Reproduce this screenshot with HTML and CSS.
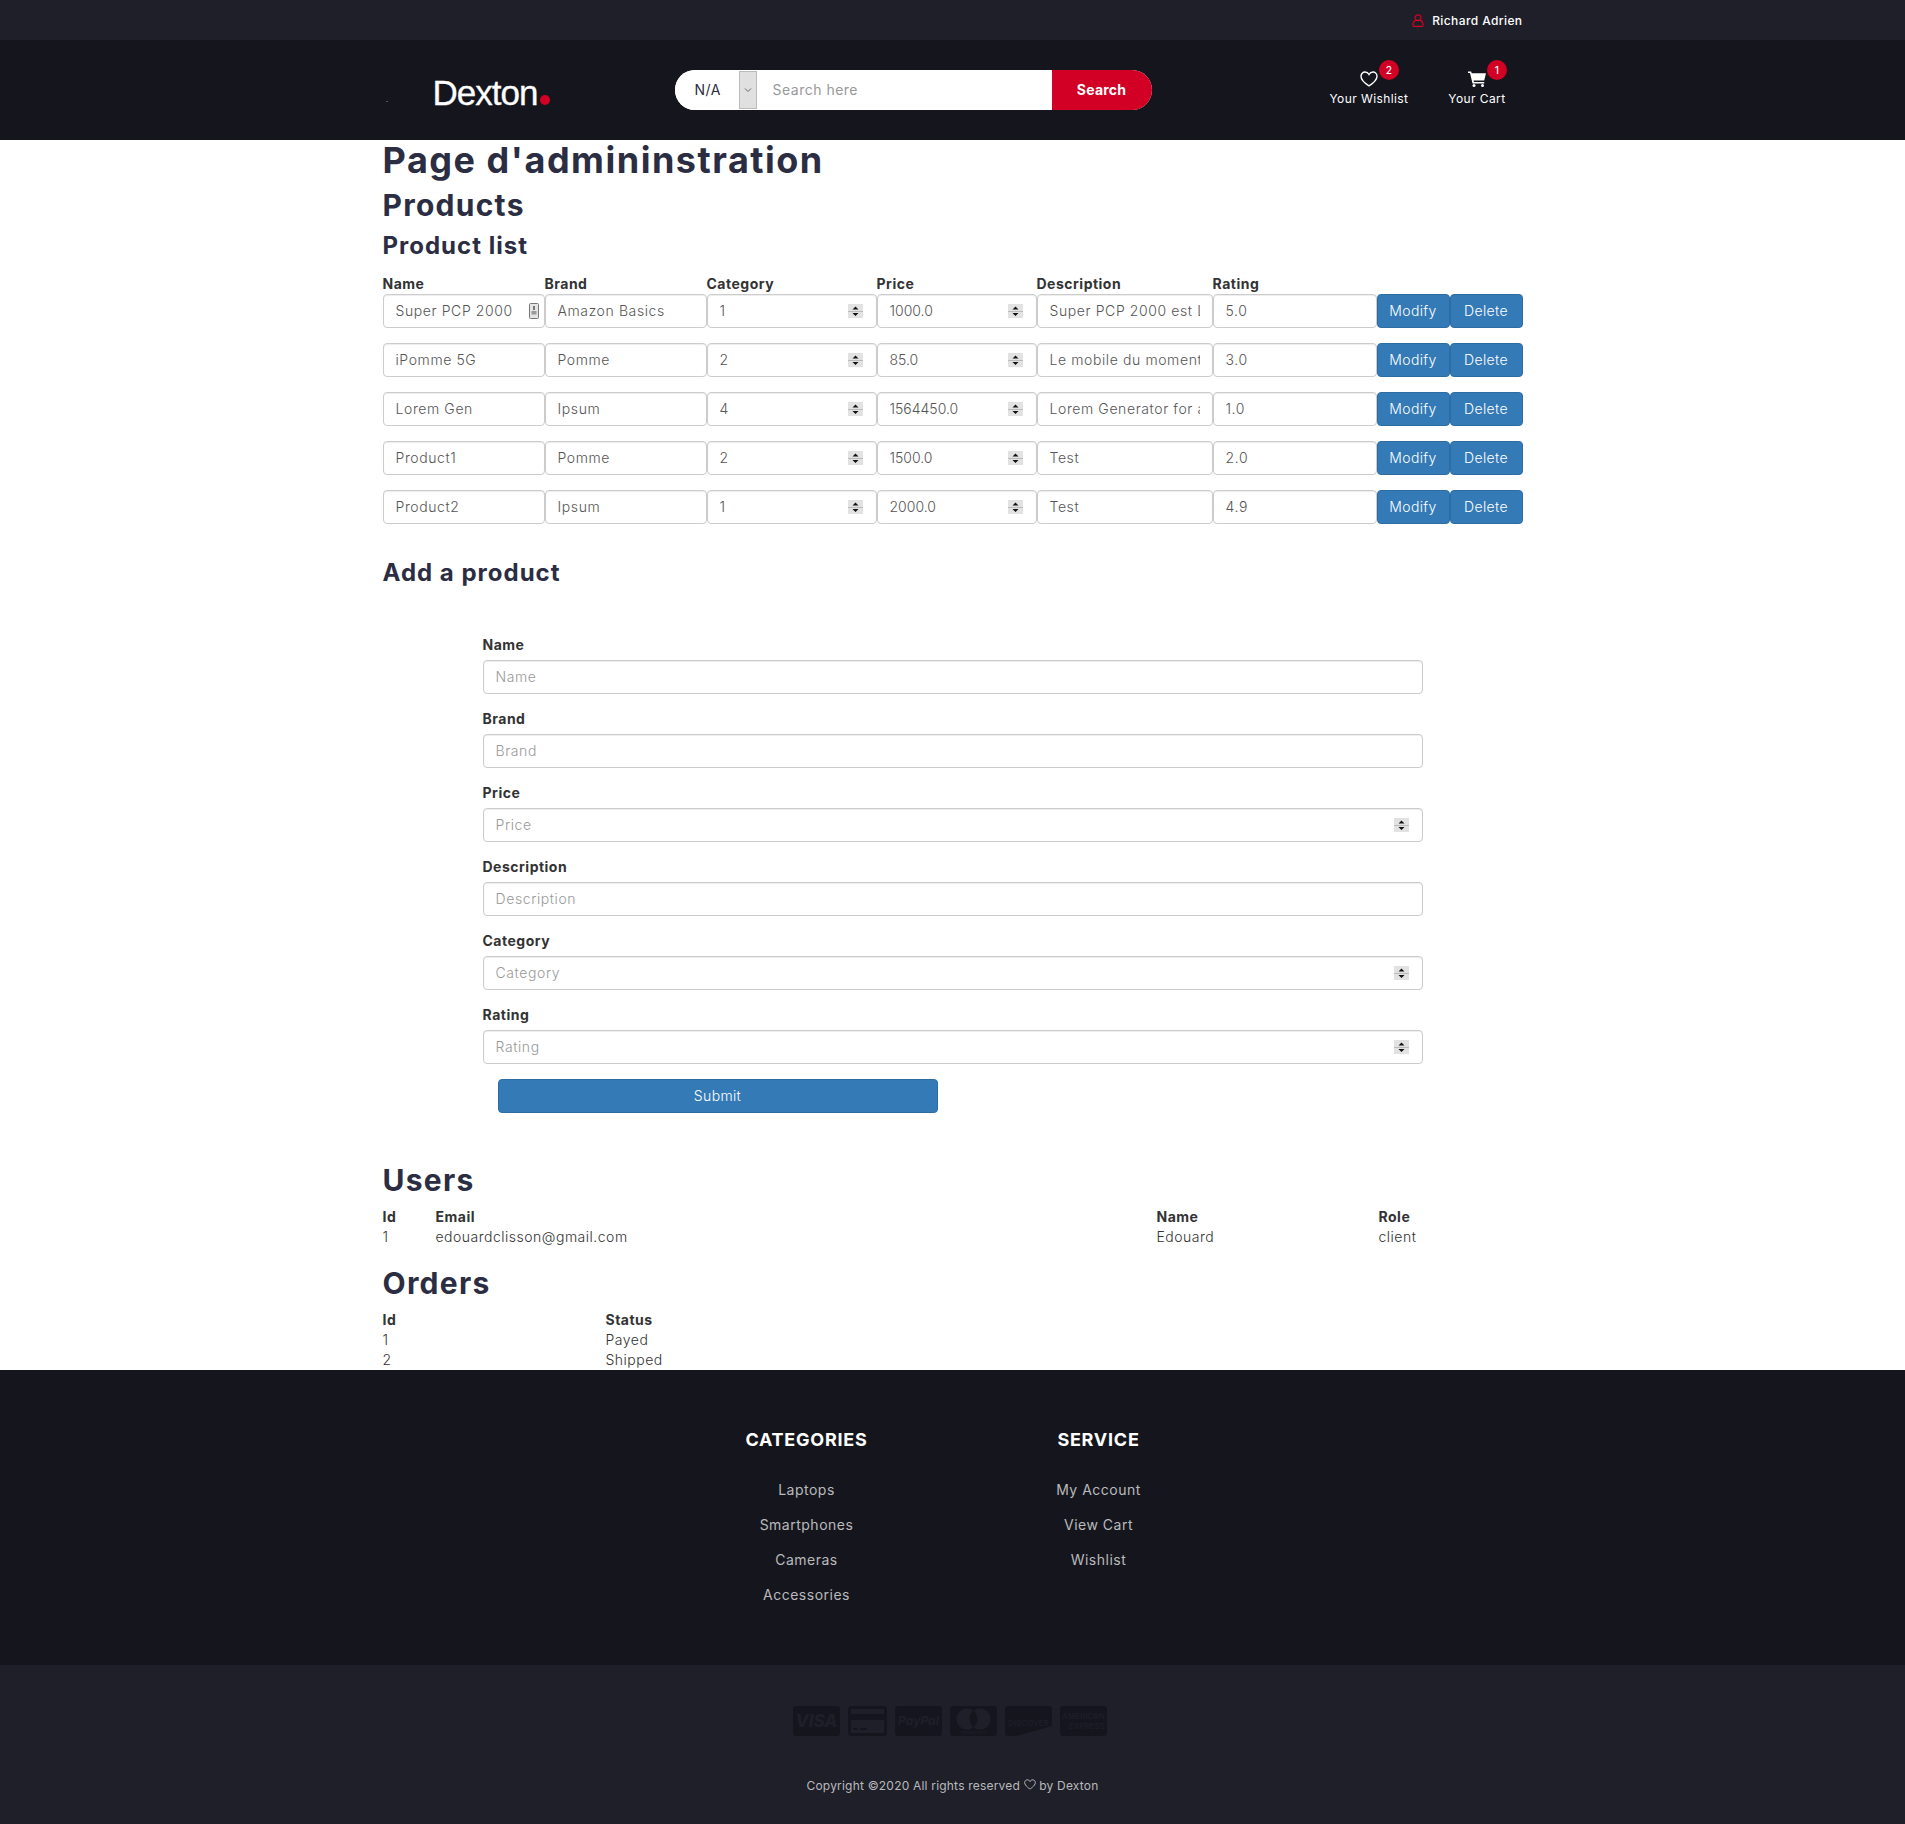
FILE: index.html
```html
<!DOCTYPE html>
<html lang="en">

<head>
    <meta charset="UTF-8">
    <meta name="viewport" content="width=device-width, initial-scale=1.0">
    <title>Dexton - Page d'admininstration</title>
    <link rel="stylesheet" href="styles.css">
</head>

<body>
    <div class="top-bar">
        <div class="container top-bar-inner">
            <svg class="user-icon" viewBox="0 0 12 13" width="12" height="13">
                <circle cx="6" cy="3.800" r="2.900" fill="none" stroke="#d10024" stroke-width="1.300" />
                <path d="M1 11.200c0-2.600 1.500-4.500 3-4.800h4c1.500.3 3 2.200 3 4.800 0 .8-.5 1.200-1.200 1.200H2.200C1.500 12.400 1 12 1 11.200z" fill="none" stroke="#d10024" stroke-width="1.300" />
            </svg>
            <a class="user-name">Richard Adrien</a>
        </div>
    </div>

    <header class="main-header">
        <div class="container header-inner">
            <div class="logo-col">
                <span class="logo-speck"></span>
                <a class="logo">Dexton<span class="logo-dot"></span></a>
            </div>
            <form class="search-form">
                <select class="search-cat">
                    <option>N/A</option>
                </select>
                <span class="search-arrow">
                    <svg viewBox="0 0 8 6" width="8" height="6">
                        <path d="M1 1.500l3 3 3-3" fill="none" stroke="#666" stroke-width="1" />
                    </svg>
                </span>
                <input class="search-input" type="text" placeholder="Search here">
                <button class="search-btn" type="button">Search</button>
            </form>
            <div class="header-links">
                <a class="header-link">
                    <svg viewBox="0 0 18 16" width="18" height="16">
                        <path d="M9 14.800S1 9.800 1 5.200C1 2.700 2.900 1 5 1c1.700 0 3.200 1 4 2.500C9.800 2 11.300 1 13 1c2.100 0 4 1.700 4 4.200 0 4.600-8 9.600-8 9.600z" fill="none" stroke="#fff" stroke-width="1.400" />
                    </svg>
                    <span>Your Wishlist</span>
                    <b class="qty">2</b>
                </a>
                <a class="header-link">
                    <svg viewBox="0 0 18 16" width="18" height="16">
                        <path d="M0 .5h3.200l.5 1.800H18l-1.800 7.200H5.600l.3 1.400h10.300v1.500H4.500L2 2H0z" fill="#fff" />
                        <circle cx="6" cy="14.500" r="1.500" fill="#fff" />
                        <circle cx="14.500" cy="14.500" r="1.500" fill="#fff" />
                    </svg>
                    <span>Your Cart</span>
                    <b class="qty">1</b>
                </a>
            </div>
        </div>
    </header>

    <main class="container">
        <h1>Page d'admininstration</h1>
        <h2>Products</h2>
        <h3>Product list</h3>
        <table class="product-table">
            <colgroup>
                <col class="c-name">
                <col class="c-brand">
                <col class="c-cat">
                <col class="c-price">
                <col class="c-desc">
                <col class="c-rating">
                <col class="c-actions">
            </colgroup>
            <thead>
                <tr>
                    <th>Name</th>
                    <th>Brand</th>
                    <th>Category</th>
                    <th>Price</th>
                    <th>Description</th>
                    <th>Rating</th>
                    <th></th>
                </tr>
            </thead>
            <tbody>
                <tr>
                    <td class="name-cell">
                        <input class="field" type="text" value="Super PCP 2000">
                        <svg class="fill-icon" viewBox="0 0 10 16" width="10" height="16">
                            <rect x=".5" y=".5" width="9" height="15" rx="1" fill="#e4e4e4" stroke="#777" />
                            <rect x="4" y="3" width="2" height="4" fill="#777" />
                            <rect x="2.500" y="8" width="5" height="3.500" fill="#999" />
                        </svg>
                    </td>
                    <td><input class="field" type="text" value="Amazon Basics"></td>
                    <td><input class="field" type="number" value="1"></td>
                    <td><input class="field" type="number" value="1000.0"></td>
                    <td><input class="field" type="text" value="Super PCP 2000 est Le meilleur PCP"></td>
                    <td><input class="field" type="text" value="5.0"></td>
                    <td class="actions"><button class="btn" type="button">Modify</button><button class="btn" type="button">Delete</button></td>
                </tr>
                <tr>
                    <td><input class="field" type="text" value="iPomme 5G"></td>
                    <td><input class="field" type="text" value="Pomme"></td>
                    <td><input class="field" type="number" value="2"></td>
                    <td><input class="field" type="number" value="85.0"></td>
                    <td><input class="field" type="text" value="Le mobile du moment"></td>
                    <td><input class="field" type="text" value="3.0"></td>
                    <td class="actions"><button class="btn" type="button">Modify</button><button class="btn" type="button">Delete</button></td>
                </tr>
                <tr>
                    <td><input class="field" type="text" value="Lorem Gen"></td>
                    <td><input class="field" type="text" value="Ipsum"></td>
                    <td><input class="field" type="number" value="4"></td>
                    <td><input class="field" type="number" value="1564450.0"></td>
                    <td><input class="field" type="text" value="Lorem Generator for all your needs"></td>
                    <td><input class="field" type="text" value="1.0"></td>
                    <td class="actions"><button class="btn" type="button">Modify</button><button class="btn" type="button">Delete</button></td>
                </tr>
                <tr>
                    <td><input class="field" type="text" value="Product1"></td>
                    <td><input class="field" type="text" value="Pomme"></td>
                    <td><input class="field" type="number" value="2"></td>
                    <td><input class="field" type="number" value="1500.0"></td>
                    <td><input class="field" type="text" value="Test"></td>
                    <td><input class="field" type="text" value="2.0"></td>
                    <td class="actions"><button class="btn" type="button">Modify</button><button class="btn" type="button">Delete</button></td>
                </tr>
                <tr>
                    <td><input class="field" type="text" value="Product2"></td>
                    <td><input class="field" type="text" value="Ipsum"></td>
                    <td><input class="field" type="number" value="1"></td>
                    <td><input class="field" type="number" value="2000.0"></td>
                    <td><input class="field" type="text" value="Test"></td>
                    <td><input class="field" type="text" value="4.9"></td>
                    <td class="actions"><button class="btn" type="button">Modify</button><button class="btn" type="button">Delete</button></td>
                </tr>
            </tbody>
        </table>

        <h3 class="add-title">Add a product</h3>
        <form class="add-form">
            <div class="form-group">
                <label>Name</label>
                <input class="field" type="text" placeholder="Name">
            </div>
            <div class="form-group">
                <label>Brand</label>
                <input class="field" type="text" placeholder="Brand">
            </div>
            <div class="form-group">
                <label>Price</label>
                <input class="field" type="number" placeholder="Price">
            </div>
            <div class="form-group">
                <label>Description</label>
                <input class="field" type="text" placeholder="Description">
            </div>
            <div class="form-group">
                <label>Category</label>
                <input class="field" type="number" placeholder="Category">
            </div>
            <div class="form-group">
                <label>Rating</label>
                <input class="field" type="number" placeholder="Rating">
            </div>
            <button class="btn submit-btn" type="button">Submit</button>
        </form>

        <h2 class="users-title">Users</h2>
        <table class="list-table users-table">
            <thead>
                <tr>
                    <th>Id</th>
                    <th>Email</th>
                    <th>Name</th>
                    <th>Role</th>
                </tr>
            </thead>
            <tbody>
                <tr>
                    <td>1</td>
                    <td>edouardclisson@gmail.com</td>
                    <td>Edouard</td>
                    <td>client</td>
                </tr>
            </tbody>
        </table>

        <h2 class="orders-title">Orders</h2>
        <table class="list-table orders-table">
            <thead>
                <tr>
                    <th>Id</th>
                    <th>Status</th>
                </tr>
            </thead>
            <tbody>
                <tr>
                    <td>1</td>
                    <td>Payed</td>
                </tr>
                <tr>
                    <td>2</td>
                    <td>Shipped</td>
                </tr>
            </tbody>
        </table>
    </main>

    <footer>
        <div class="footer-top">
            <div class="container footer-cols">
                <div class="footer-col">
                    <h3 class="footer-title">Categories</h3>
                    <ul>
                        <li><a>Laptops</a></li>
                        <li><a>Smartphones</a></li>
                        <li><a>Cameras</a></li>
                        <li><a>Accessories</a></li>
                    </ul>
                </div>
                <div class="footer-col">
                    <h3 class="footer-title">Service</h3>
                    <ul>
                        <li><a>My Account</a></li>
                        <li><a>View Cart</a></li>
                        <li><a>Wishlist</a></li>
                    </ul>
                </div>
            </div>
        </div>
        <div class="footer-bottom">
            <div class="payments">
                <span class="pay pay-visa">VISA</span>
                <svg class="pay-card" viewBox="0 0 39 30" width="39" height="30">
                    <rect width="39" height="30" rx="3" fill="#15161d" />
                    <rect x="3" y="3" width="33" height="5" fill="#1e1f29" />
                    <rect x="3" y="14" width="33" height="13" fill="#1e1f29" />
                    <rect x="5" y="22" width="5" height="2" fill="#15161d" />
                    <rect x="12" y="22" width="7" height="2" fill="#15161d" />
                </svg>
                <span class="pay pay-paypal">PayPal</span>
                <span class="pay pay-mc">
                    <svg viewBox="0 0 47 30" width="47" height="30">
                        <circle cx="17" cy="13" r="10.500" fill="#1e1f29" />
                        <circle cx="30" cy="13" r="10.500" fill="#1e1f29" />
                        <path d="M23.500 4.800a10.500 10.500 0 0 1 0 16.400a10.500 10.500 0 0 1 0-16.400z" fill="#15161d" />
                    </svg>
                    <small>mastercard</small>
                </span>
                <span class="pay pay-discover">DISCOVER</span>
                <span class="pay pay-amex">AMERICAN<br>EXPRESS</span>
            </div>
            <p class="copyright">Copyright ©2020 All rights reserved
                <svg viewBox="0 0 18 16" width="12" height="11">
                    <path d="M9 14.800S1 9.800 1 5.200C1 2.700 2.900 1 5 1c1.700 0 3.200 1 4 2.500C9.800 2 11.300 1 13 1c2.100 0 4 1.700 4 4.200 0 4.600-8 9.600-8 9.600z" fill="none" stroke="#b9babc" stroke-width="1.500" />
                </svg>
                by Dexton</p>
        </div>
    </footer>
</body>

</html>
```

FILE: styles.css
```css
* {
    box-sizing: border-box;
}

body {
    margin: 0;
    font-family: Inter, "Open Sans", sans-serif;
    font-size: 14px;
    line-height: 20px;
    letter-spacing: 0.5px;
    color: #333;
    background-color: #fff;
}

.container {
    width: 1170px;
    margin: 0 auto;
    padding: 0 15px;
}

/* top bar */
.top-bar {
    height: 40px;
    background-color: #1e1f29;
}

.top-bar-inner {
    display: flex;
    align-items: center;
    justify-content: flex-end;
    height: 40px;
    padding-top: 1px;
}

.user-icon {
    margin-right: 8px;
}

.user-name {
    color: #fff;
    font-size: 12px;
    font-weight: 500;
    letter-spacing: 0.4px;
}

/* header */
.main-header {
    height: 100px;
    background-color: #15161d;
}

.header-inner {
    display: flex;
    align-items: center;
    height: 100px;
}

.logo-col {
    display: flex;
    align-items: center;
    width: 292px;
    position: relative;
}

.logo-speck {
    position: absolute;
    left: 3px;
    top: 33px;
    width: 2px;
    height: 1px;
    background-color: #555;
}

.logo {
    margin-top: 5px;
    margin-left: 50px;
    color: #fff;
    font-family: "Liberation Sans", Arial, sans-serif;
    font-size: 35px;
    line-height: 40px;
    letter-spacing: -1px;
    white-space: nowrap;
    -webkit-text-stroke: 0.3px #fff;
}

.logo-dot {
    display: inline-block;
    width: 10px;
    height: 10px;
    margin-left: 3px;
    border-radius: 50%;
    background-color: #d10024;
}

.search-form {
    display: flex;
    width: 477px;
    height: 40px;
    border-radius: 20px;
    overflow: hidden;
    background-color: #fff;
}

.search-cat {
    width: 64px;
    padding: 0 0 0 20px;
    border: 0;
    appearance: none;
    background: #fff;
    color: #2b2d42;
    font: inherit;
    letter-spacing: inherit;
}

.search-arrow {
    display: flex;
    align-items: center;
    justify-content: center;
    width: 18px;
    height: 38px;
    margin-top: 1px;
    border: 1px solid #bbb;
    background-color: #e0e0e0;
}

.search-input {
    flex: 1;
    min-width: 0;
    padding: 0 16px;
    border: 0;
    outline: 0;
    font: inherit;
    letter-spacing: inherit;
}

.search-input::placeholder {
    color: #999;
}

.search-btn {
    width: 100px;
    border: 0;
    background-color: #d10024;
    color: #fff;
    font: inherit;
    font-weight: 700;
    letter-spacing: 0.2px;
}

.header-links {
    display: flex;
    margin-left: auto;
    margin-right: 17px;
    margin-bottom: 2px;
    gap: 40px;
}

.header-link {
    position: relative;
    display: flex;
    flex-direction: column;
    align-items: center;
    gap: 3px;
    color: #fff;
    font-size: 12px;
    line-height: 18px;
    letter-spacing: 0.4px;
}

.qty {
    position: absolute;
    top: -11px;
    left: 50%;
    width: 20px;
    height: 20px;
    margin-left: 10px;
    border-radius: 50%;
    background-color: #d10024;
    color: #fff;
    font-size: 10px;
    font-weight: 500;
    line-height: 20px;
    letter-spacing: 0;
    text-align: center;
}

/* page headings */
h1,
h2,
h3 {
    margin: 0;
    color: #2b2d42;
    font-weight: 700;
    letter-spacing: 0.042em;
}

h1 {
    font-size: 36px;
    line-height: 40px;
}

h2 {
    margin-top: 9px;
    font-size: 30px;
    line-height: 33px;
}

h3 {
    margin-top: 11px;
    margin-bottom: 15px;
    font-size: 24px;
    line-height: 26px;
}

/* product table */
table {
    border-collapse: collapse;
    border-spacing: 0;
    table-layout: fixed;
}

th {
    padding: 0;
    font-weight: 700;
    text-align: left;
}

td {
    padding: 0;
}

.list-table td {
    font-weight: 300;
}

.product-table {
    width: 1140px;
}

.product-table td {
    padding-bottom: 15px;
}

.c-name,
.c-brand {
    width: 162px;
}

.c-cat {
    width: 170px;
}

.c-price {
    width: 160px;
}

.c-desc {
    width: 176px;
}

.c-rating {
    width: 164px;
}

.c-actions {
    width: 146px;
}

.field {
    display: block;
    width: 100%;
    height: 34px;
    padding: 5px 12px 7px;
    border: 1px solid #ccc;
    border-radius: 4px;
    box-shadow: inset 0 1px 1px rgba(0, 0, 0, 0.075);
    background-color: #fff;
    color: #555;
    font: inherit;
    font-weight: 300;
    letter-spacing: 0.6px;
}

.field[type="number"] {
    letter-spacing: 0;
}

.field::placeholder {
    color: #999;
    letter-spacing: 0.6px;
}

.field::-webkit-inner-spin-button {
    -webkit-appearance: none;
    display: block;
    width: 15px;
    height: 14px;
    margin: 2px 1px 0 0;
    opacity: 1;
    background: url("data:image/svg+xml,%3Csvg xmlns='http://www.w3.org/2000/svg' width='15' height='14'%3E%3Crect width='15' height='14' fill='%23e2e2e2'/%3E%3Crect y='7' width='15' height='1' fill='%23bbb'/%3E%3Cpath d='M7.500 2.500l3 3h-6zM7.500 12l-3-3h6z' fill='%23111'/%3E%3C/svg%3E") no-repeat;
}

.name-cell {
    position: relative;
}

.fill-icon {
    position: absolute;
    right: 6px;
    top: 9px;
}

.btn {
    height: 34px;
    padding: 0 12px;
    border: 1px solid #2e6da4;
    border-radius: 4px;
    background-color: #337ab7;
    color: #fff;
    font: inherit;
    font-weight: 300;
    letter-spacing: 0.35px;
}

.actions {
    display: flex;
}

.actions .btn {
    flex: 1;
    padding: 0;
}

/* add form */
h3.add-title {
    margin-top: 21px;
    margin-bottom: 49px;
}

.add-form {
    width: 940px;
    margin-left: 100px;
}

.form-group {
    margin-bottom: 15px;
}

.form-group label {
    display: block;
    margin-bottom: 5px;
    font-weight: 700;
}

.submit-btn {
    display: block;
    width: 440px;
    margin-left: 15px;
}

/* users, orders */
h2.users-title {
    margin-top: 51px;
    margin-bottom: 10px;
}

h2.orders-title {
    margin-top: 20px;
    margin-bottom: 10px;
}

.users-table {
    width: 1140px;
}

.users-table th:nth-child(1) {
    width: 53px;
}

.users-table th:nth-child(2) {
    width: 721px;
}

.users-table th:nth-child(3) {
    width: 222px;
}

.orders-table th:nth-child(1) {
    width: 223px;
}

/* footer */
.footer-top {
    height: 295px;
    padding-top: 57px;
    background-color: #15161d;
}

.footer-cols {
    display: flex;
    justify-content: center;
}

.footer-col {
    width: 292px;
    text-align: center;
}

.footer-col ul {
    margin: 0;
    padding: 0;
    list-style: none;
}

.footer-col li {
    margin-bottom: 15px;
}

.footer-col a {
    color: #b9babc;
}

h3.footer-title {
    margin: 0 0 27px;
    color: #fff;
    font-size: 18px;
    line-height: 26px;
    text-transform: uppercase;
}

.footer-bottom {
    height: 159px;
    padding-top: 41px;
    background-color: #1e1f29;
    text-align: center;
}

.payments {
    display: flex;
    justify-content: center;
    gap: 8px;
    margin-left: -5px;
}

.pay {
    display: flex;
    align-items: center;
    justify-content: center;
    position: relative;
    width: 47px;
    height: 30px;
    border-radius: 3px;
    background-color: #15161d;
    color: #1e1f29;
    font-weight: 700;
    letter-spacing: 0;
    overflow: hidden;
}

.pay-visa {
    font-size: 17px;
    font-style: italic;
    font-weight: 800;
}

.pay-paypal {
    font-size: 12px;
    font-style: italic;
}

.pay-mc small {
    position: absolute;
    left: 0;
    right: 0;
    bottom: 1px;
    font-size: 5px;
    line-height: 6px;
    font-weight: 400;
    text-align: center;
}

.pay-discover {
    font-size: 8px;
    font-weight: 500;
    align-items: flex-start;
    padding-top: 7px;
}

.pay-discover::after {
    content: "";
    position: absolute;
    right: 0;
    bottom: 0;
    border-style: solid;
    border-width: 0 0 10px 36px;
    border-color: transparent transparent #1e1f29 transparent;
}

.pay-amex {
    font-size: 8px;
    font-weight: 500;
    line-height: 10px;
    text-align: right;
}

.copyright {
    margin: 40px 0 0;
    color: #b9babc;
    font-size: 12px;
    letter-spacing: 0.2px;
}
```
